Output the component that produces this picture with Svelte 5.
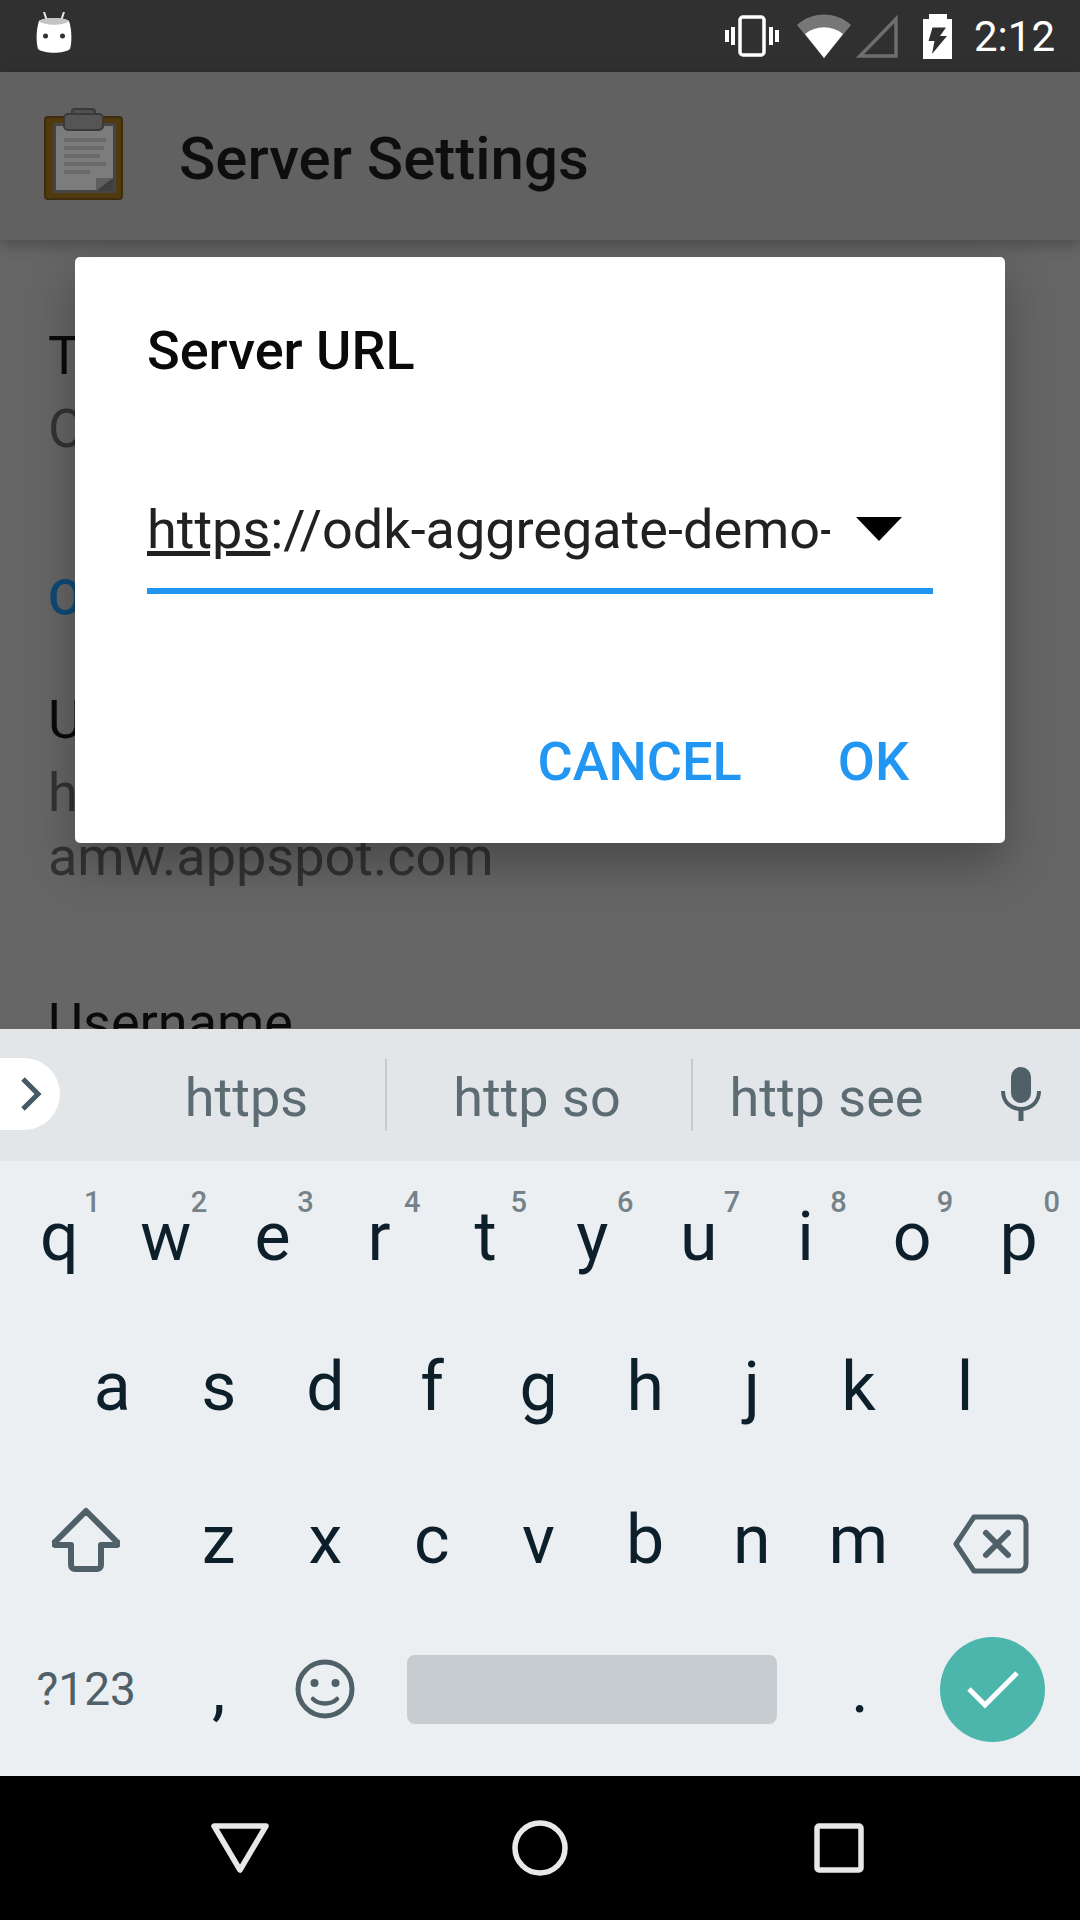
<script>
  const topRow = [["q","1"],["w","2"],["e","3"],["r","4"],["t","5"],["y","6"],["u","7"],["i","8"],["o","9"],["p","0"]]
  const midRow = ["a","s","d","f","g","h","j","k","l"]
  const lowRow = ["z","x","c","v","b","n","m"]
</script>

<div class="screen">
  <div class="status">
    <svg class="robot" width="36" height="42" viewBox="0 0 36 42">
      <path d="M8 0 11 9M28 0 25 9" stroke="#e8e8e8" stroke-width="2" fill="none"/>
      <path d="M3 9C8 5 28 5 33 9 36 18 36 30 34 37 28 42 8 42 2 37 0 30 0 18 3 9Z" fill="#fff"/>
      <path d="M3 9C8 5 28 5 33 9 28 14 8 14 3 9Z" fill="#c4c4c4"/>
      <circle cx="9.500" cy="24" r="2.500" fill="#303030"/>
      <circle cx="26.500" cy="24" r="2.500" fill="#303030"/>
    </svg>
    <div class="status-right">
      <svg width="54" height="42" viewBox="0 0 54 42" class="vib">
        <rect x="15" y="2" width="24" height="38" rx="3" fill="none" stroke="#fff" stroke-width="3.500"/>
        <path d="M0 15h4v12H0zM6 12h4v18H6zM44 12h4v18h-4zM50 15h4v12h-4z" fill="#fff"/>
      </svg>
      <svg width="54" height="44" viewBox="0 0 54 44" class="wifi">
        <path d="M0 11C15-3 39-3 54 11L27 44Z" fill="#777"/>
        <path d="M8 20C19 11 35 11 46 20L27 44Z" fill="#fff"/>
      </svg>
      <svg width="42" height="43" viewBox="0 0 42 43" class="sig">
        <path d="M4 41 40 4V41Z" fill="none" stroke="#6e6e6e" stroke-width="3.500"/>
      </svg>
      <svg width="29" height="45" viewBox="0 0 29 45" class="bat">
        <path d="M6 0h18v5h5v40H0V5h6Z" fill="#fff"/>
        <path d="M9.500 13.500H23L17 22h7L9 40l2.500-13H5.500Z" fill="#303030"/>
      </svg>
      <span class="time">2:12</span>
    </div>
  </div>

  <header class="appbar">
    <svg class="clip" width="80" height="92" viewBox="0 0 80 92">
      <rect x="1" y="9" width="77" height="82" rx="3" fill="#523a10" stroke="#3e2d0c" stroke-width="2"/>
      <rect x="10.500" y="16.500" width="60" height="67" fill="#7c7c7c" stroke="#454545" stroke-width="3"/>
      <path d="M20 30h42v4H20zM20 38h40v4H20zM20 46h36v4H20zM20 54h42v4H20zM20 62h26v4H20z" fill="#696969"/>
      <path d="M52 83V74L69 70 69 83Z" fill="#3f3f3f"/>
      <path d="M52 70H69L52 83Z" fill="#5e5e5e"/>
      <rect x="28" y="1" width="23" height="10" rx="3" fill="#505050" stroke="#3a3a3a" stroke-width="2"/>
      <rect x="20" y="6" width="39" height="16" rx="4" fill="#555" stroke="#3a3a3a" stroke-width="2"/>
    </svg>
    <h1>Server Settings</h1>
  </header>

  <main class="content">
    <div class="label">Type</div>
    <div class="sub">ODK Aggregate</div>
    <div class="cat">ODK Aggregate Settings</div>
    <div class="label url">URL</div>
    <div class="sub">https://odk-aggregate-demo-<br>amw.appspot.com</div>
    <div class="label user">Username</div>

    <div class="dialog">
      <h2>Server URL</h2>
      <div class="field">
        <span class="value"><u>https</u>://odk-aggregate-demo-</span>
        <span class="caret"></span>
      </div>
      <div class="actions">
        <span>CANCEL</span>
        <span>OK</span>
      </div>
    </div>
  </main>

  <section class="keyboard">
    <div class="suggest">
      <div class="tab">
        <svg width="24" height="36" viewBox="0 0 24 36"><path d="M4 3 19 18 4 33" fill="none" stroke="#455a64" stroke-width="5"/></svg>
      </div>
      <div class="word first">https</div>
      <div class="word bar second">http so</div>
      <div class="word bar third">http see</div>
      <svg class="mic" width="40" height="54" viewBox="0 0 40 54">
        <rect x="10" y="0" width="20" height="36" rx="10" fill="#4f6068"/>
        <path d="M2 24C2 48 38 48 38 24" fill="none" stroke="#4f6068" stroke-width="4"/>
        <path d="M20 42V54" stroke="#4f6068" stroke-width="5"/>
      </svg>
    </div>

    <div class="row top">
      {#each topRow as [k, n]}
        <div class="key"><sup>{n}</sup>{k}</div>
      {/each}
    </div>
    <div class="row mid">
      {#each midRow as k}
        <div class="key">{k}</div>
      {/each}
    </div>
    <div class="row low">
      <div class="side left">
        <svg width="68" height="66" viewBox="0 0 68 66">
          <path d="M34 4 3 35a1.500 1.500 0 0 0 1 3H19V58a4 4 0 0 0 4 4H45a4 4 0 0 0 4-4V38H64a1.500 1.500 0 0 0 1-3Z" fill="none" stroke="#4f6068" stroke-width="6" stroke-linejoin="round"/>
        </svg>
      </div>
      {#each lowRow as k}
        <div class="key">{k}</div>
      {/each}
      <div class="side right">
        <svg class="back" width="76" height="60" viewBox="0 0 76 60">
          <path d="M21 3H66a7 7 0 0 1 7 7V50a7 7 0 0 1-7 7H21L3 30Z" fill="none" stroke="#4f6068" stroke-width="5" stroke-linejoin="round"/>
          <path d="M33 19 55 41M55 19 33 41" stroke="#4f6068" stroke-width="6" stroke-linecap="round"/>
        </svg>
      </div>
    </div>
    <div class="row bottom">
      <div class="side left sym">?123</div>
      <div class="key comma">,</div>
      <div class="key">
        <svg width="60" height="60" viewBox="0 0 60 60">
          <circle cx="30" cy="30" r="27" fill="none" stroke="#4f6068" stroke-width="5"/>
          <circle cx="19.500" cy="24" r="4" fill="#4f6068"/>
          <circle cx="40.500" cy="24" r="4" fill="#4f6068"/>
          <path d="M18 40C24 46 36 46 42 40" fill="none" stroke="#4f6068" stroke-width="4.500" stroke-linecap="round"/>
        </svg>
      </div>
      <div class="space"></div>
      <div class="key dot">.</div>
      <div class="side right">
        <div class="enter">
          <svg width="54" height="42" viewBox="0 0 54 42"><path d="M3 21 19 37 51 5" fill="none" stroke="#fff" stroke-width="5"/></svg>
        </div>
      </div>
    </div>
  </section>

  <nav class="navbar">
    <svg width="58" height="50" viewBox="0 0 58 50"><path d="M3 3H55L29 47Z" fill="none" stroke="#e8e8e8" stroke-width="5.500" stroke-linejoin="round"/></svg>
    <svg class="home" width="56" height="56" viewBox="0 0 56 56"><circle cx="28" cy="28" r="25" fill="none" stroke="#e8e8e8" stroke-width="5.500"/></svg>
    <svg class="recent" width="50" height="50" viewBox="0 0 50 50"><rect x="3" y="3" width="44" height="44" rx="2" fill="none" stroke="#e8e8e8" stroke-width="5.500"/></svg>
  </nav>
</div>

<style>
  :global(body) {
    margin: 0;
    background: #000;
  }
  .screen {
    width: 1080px;
    height: 1920px;
    display: flex;
    flex-direction: column;
    overflow: hidden;
    font-family: Roboto, "Liberation Sans", sans-serif;
  }

  .status {
    height: 72px;
    flex: none;
    background: #303030;
    display: flex;
    align-items: center;
    justify-content: space-between;
    padding: 0 25px 0 36px;
    box-sizing: border-box;
  }
  .robot {
    margin-top: -6px;
  }
  .status-right {
    display: flex;
    align-items: center;
  }
  .vib {
    margin-right: 18px;
  }
  .wifi {
    margin-right: 5px;
  }
  .sig {
    margin-right: 25px;
  }
  .time {
    margin: 2px 0 0 22px;
    font-size: 42px;
    color: #fff;
    line-height: 1;
  }

  .appbar {
    height: 168px;
    flex: none;
    background: #616161;
    display: flex;
    align-items: center;
    padding-left: 44px;
    box-sizing: border-box;
    position: relative;
    z-index: 1;
    box-shadow: 0 5px 15px rgba(0, 0, 0, 0.26);
  }
  .clip {
    margin-bottom: 4px;
  }
  .appbar h1 {
    margin: 4px 0 0 55px;
    font-size: 60px;
    font-weight: 500;
    color: #0e0e0e;
  }

  .content {
    flex: 1;
    min-height: 0;
    position: relative;
    overflow: hidden;
    background: #666;
    padding: 80px 48px 0;
  }
  .label {
    font-size: 54px;
    line-height: 72px;
    color: #0a0a0a;
  }
  .sub {
    margin-top: 5px;
    font-size: 54px;
    line-height: 64px;
    color: #333;
  }
  .cat {
    margin-top: 105px;
    font-size: 50px;
    font-weight: 500;
    line-height: 64px;
    color: #0e4a75;
  }
  .url {
    margin-top: 54px;
  }
  .user {
    margin-top: 98px;
  }

  .dialog {
    position: absolute;
    left: 75px;
    top: 17px;
    width: 930px;
    height: 586px;
    background: #fff;
    border-radius: 5px;
    box-shadow: 0 20px 50px rgba(0, 0, 0, 0.3);
    padding: 62px 72px 0;
    box-sizing: border-box;
  }
  .dialog h2 {
    margin: 0;
    font-size: 54px;
    font-weight: 500;
    line-height: 64px;
    color: #0a0a0a;
  }
  .field {
    margin-top: 82px;
    height: 118px;
    padding-top: 5px;
    border-bottom: 6px solid #2196f3;
    display: flex;
    align-items: center;
    width: 786px;
  }
  .value {
    font-size: 54px;
    color: #212121;
    width: 683px;
    flex: none;
    white-space: nowrap;
    overflow: hidden;
  }
  .caret {
    margin-left: 26px;
    border-left: 23px solid transparent;
    border-right: 23px solid transparent;
    border-top: 24px solid #000;
  }
  .actions {
    margin-top: 136px;
    display: flex;
    justify-content: flex-end;
    gap: 96px;
    font-size: 54px;
    font-weight: 500;
    color: #2196f3;
    width: 762px;
  }

  .keyboard {
    flex: none;
    height: 747px;
    background: #eceff1;
    display: flex;
    flex-direction: column;
    color: #0d1f2a;
  }
  .suggest {
    height: 132px;
    flex: none;
    background: #e2e6e9;
    display: grid;
    grid-template-columns: 60px 325px 306px 1fr;
    align-items: center;
    position: relative;
  }
  .tab {
    height: 72px;
    background: #fff;
    border-radius: 0 36px 36px 0;
    display: flex;
    align-items: center;
    padding-left: 19px;
    box-sizing: border-box;
    margin-top: -2px;
  }
  .word {
    height: 72px;
    line-height: 78px;
    font-size: 54px;
    text-align: center;
    color: #5d6b73;
    white-space: nowrap;
    box-sizing: border-box;
  }
  .word.bar {
    border-left: 2px solid #c5cacd;
  }
  .first {
    padding-left: 48px;
  }
  .second {
    padding-right: 4px;
  }
  .third {
    padding-right: 120px;
  }
  .mic {
    position: absolute;
    right: 39px;
    top: 38px;
  }

  .row {
    height: 152px;
    flex: none;
    display: flex;
    align-items: center;
  }
  .top {
    padding-left: 6px;
  }
  .mid {
    padding-left: 59px;
    margin-top: -2px;
  }
  .low {
    margin-top: 1px;
  }
  .bottom {
    margin-top: -3px;
  }
  .key {
    width: 106.600px;
    flex: none;
    text-align: center;
    font-size: 68px;
    line-height: 80px;
    position: relative;
    display: flex;
    justify-content: center;
    align-items: center;
  }
  .key sup {
    position: absolute;
    right: 12px;
    top: -11px;
    font-size: 29px;
    line-height: 32px;
    font-weight: 500;
    color: #75828a;
  }
  .side {
    flex: none;
    display: flex;
    justify-content: center;
    align-items: center;
    box-sizing: border-box;
  }
  .side.left {
    width: 165.400px;
    padding-left: 7px;
  }
  .side.right {
    width: 159.400px;
  }
  .back {
    margin-top: 8px;
  }
  .sym {
    font-size: 46px;
    color: #4f6068;
  }
  .space {
    width: 370px;
    height: 69px;
    border-radius: 8px;
    background: #c7ccd0;
    margin-left: 28px;
    flex: none;
  }
  .dot {
    margin-left: 30px;
  }
  .enter {
    width: 105px;
    height: 105px;
    border-radius: 50%;
    background: #4db6ac;
    display: flex;
    align-items: center;
    justify-content: center;
  }

  .navbar {
    flex: none;
    height: 144px;
    background: #000;
    display: flex;
    align-items: center;
    padding-left: 211px;
    box-sizing: border-box;
  }
  .home {
    margin-left: 243px;
  }
  .recent {
    margin-left: 246px;
  }
</style>
